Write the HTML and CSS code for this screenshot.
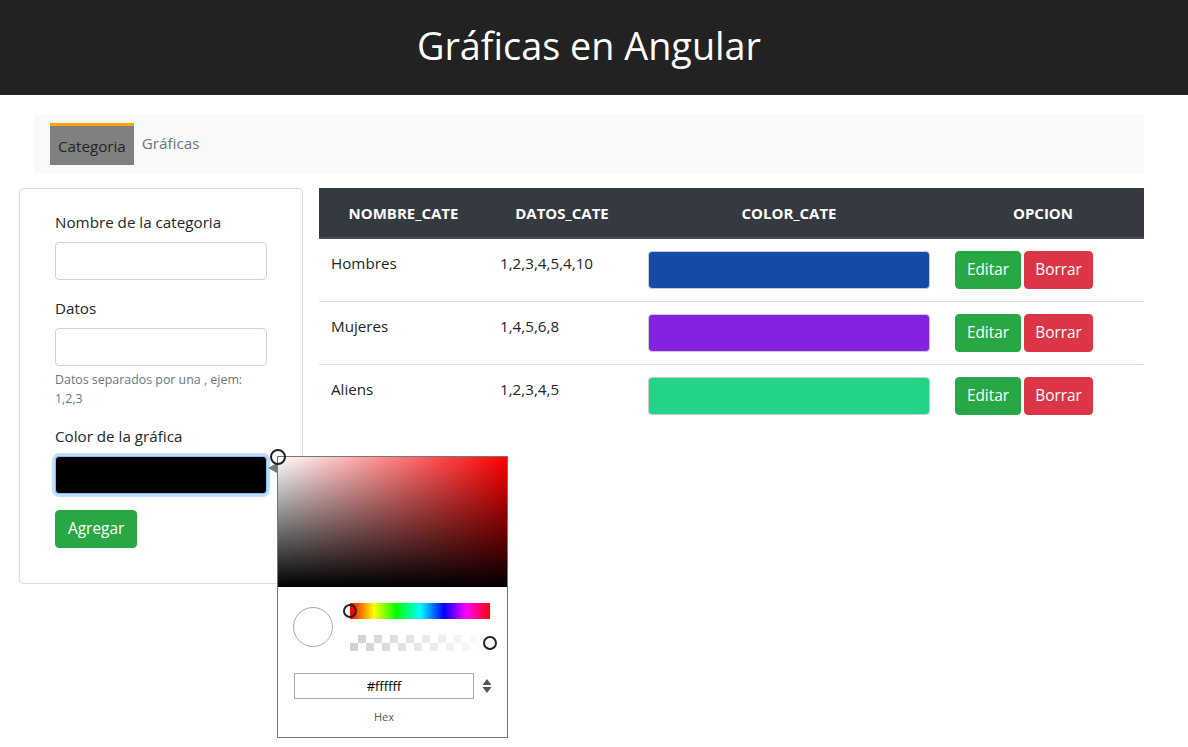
FILE: index.html
```html
<!DOCTYPE html>
<html lang="es">
<head>
<meta charset="utf-8">
<title>Gráficas en Angular</title>
<link rel="stylesheet" href="styles.css">
</head>
<body>
<header class="topbar">
  <h1 class="title">Gráficas en Angular</h1>
</header>

<nav class="tabs">
  <a class="tab tab-active">Categoria</a>
  <a class="tab">Gráficas</a>
</nav>

<section class="content">
  <div class="card">
    <div class="form-group">
      <label class="label">Nombre de la categoria</label>
      <div class="input"></div>
    </div>
    <div class="form-group">
      <label class="label">Datos</label>
      <div class="input"></div>
      <small class="help">Datos separados por una , ejem: 1,2,3</small>
    </div>
    <div class="form-group">
      <label class="label">Color de la gráfica</label>
      <div class="input input-color"></div>
    </div>
    <button class="btn btn-success">Agregar</button>
  </div>

  <table class="table">
    <colgroup>
      <col class="c1"><col class="c2"><col class="c3"><col class="c4">
    </colgroup>
    <thead>
      <tr><th>NOMBRE_CATE</th><th>DATOS_CATE</th><th>COLOR_CATE</th><th>OPCION</th></tr>
    </thead>
    <tbody>
      <tr>
        <td>Hombres</td><td>1,2,3,4,5,4,10</td>
        <td><div class="swatch sw-blue"></div></td>
        <td><div class="actions"><button class="btn btn-success">Editar</button><button class="btn btn-danger">Borrar</button></div></td>
      </tr>
      <tr>
        <td>Mujeres</td><td>1,4,5,6,8</td>
        <td><div class="swatch sw-purple"></div></td>
        <td><div class="actions"><button class="btn btn-success">Editar</button><button class="btn btn-danger">Borrar</button></div></td>
      </tr>
      <tr>
        <td>Aliens</td><td>1,2,3,4,5</td>
        <td><div class="swatch sw-green"></div></td>
        <td><div class="actions"><button class="btn btn-success">Editar</button><button class="btn btn-danger">Borrar</button></div></td>
      </tr>
    </tbody>
  </table>
</section>

<div class="picker">
  <span class="picker-arrow"></span>
  <div class="sat">
    <span class="sat-cursor"></span>
  </div>
  <div class="hue-alpha">
    <div class="selected"></div>
    <div class="sliders">
      <div class="hue"><span class="knob knob-hue"></span></div>
      <div class="alpha"><span class="knob knob-alpha"></span></div>
    </div>
  </div>
  <div class="hex-row">
    <div class="hex-input">#ffffff</div>
    <svg class="switch" width="10" height="16" viewBox="0 0 10 16"><path d="M5 1 L9.5 7 H0.5 Z M0.5 9 H9.5 L5 15 Z" fill="#555"/></svg>
  </div>
  <div class="hex-label">Hex</div>
</div>
</body>
</html>
```

FILE: styles.css
```css
* { box-sizing: border-box; }
body {
  margin: 0;
  font-family: "Open Sans", "Noto Sans", sans-serif;
  font-size: 15.2px;
  line-height: 24px;
  color: #212529;
  background: #fff;
}
.topbar {
  height: 95px;
  background: #222222;
  display: flex;
  align-items: center;
  justify-content: center;
}
.title {
  margin: 0;
  color: #fff;
  font-weight: 400;
  font-size: 37.8px;
  line-height: 1;
  padding: 0 10px 3px 0;
}
.tabs {
  margin: 20px 0 0 34px;
  width: 1110px;
  height: 58px;
  background: #f8f9fa;
  padding: 8px 16px;
  display: flex;
  align-items: flex-start;
}
.tab {
  padding: 8px 8px 7px;
  color: #6c757d;
  line-height: 24px;
}
.tab-active {
  background: #808080;
  border-top: 3px solid #ffa500;
  color: #212529;
  height: 42px;
}
.content {
  display: flex;
  align-items: flex-start;
  margin: 15px 0 0 19px;
  gap: 16px;
}
.card {
  width: 284px;
  border: 1px solid #dcdcdc;
  border-radius: 4px;
  padding: 21px 35px 35px 35px;
}
.form-group { margin-bottom: 16px; }
.label { display: block; margin-bottom: 8px; }
.input {
  height: 38px;
  border: 1px solid #ced4da;
  border-radius: 4px;
  background: #fff;
}
.input-color {
  background: #000;
  border-color: #80bdff;
  box-shadow: 0 0 0 3px rgba(0, 123, 255, 0.25);
  margin-top: 7px;
}
.help {
  display: block;
  margin-top: 4px;
  font-size: 12.4px;
  line-height: 19px;
  color: #6c757d;
}
.btn {
  font-family: inherit;
  font-size: 15.4px;
  line-height: 24px;
  padding: 6px 12px;
  border: 1px solid transparent;
  border-radius: 4px;
  color: #fff;
  cursor: pointer;
}
.btn-success { background: #28a745; border-color: #28a745; }
.btn-danger { background: #dc3545; border-color: #dc3545; }

.table {
  width: 825px;
  border-collapse: collapse;
  table-layout: fixed;
}
.c1 { width: 169px; }
.c2 { width: 148px; }
.c3 { width: 306px; }
.c4 { width: 202px; }
.table th {
  background: #343a40;
  color: #fff;
  font-weight: 700;
  font-size: 15px;
  line-height: 24px;
  padding: 13px 12px 12px;
  text-align: center;
  border-bottom: 2px solid #454d55;
}
.table td {
  padding: 12px;
  vertical-align: top;
  border-top: 1px solid #dee2e6;
}
.table tbody tr:first-child td { border-top: none; }
.swatch {
  height: 38px;
  border: 1px solid #c8cdd3;
  border-radius: 4px;
}
.sw-blue { background: #164aa6; }
.sw-purple { background: #8322e0; }
.sw-green { background: #23d486; }
.actions { display: flex; gap: 3px; padding-left: 1px; }
.actions .btn-success { width: 66px; padding: 6px 0; }
.actions .btn-danger { width: 69px; padding: 6px 0; }

/* color picker overlay */
.picker {
  position: absolute;
  left: 277px;
  top: 456px;
  width: 231px;
  height: 282px;
  border: 1px solid #777;
  background: #fff;
}
.picker-arrow {
  position: absolute;
  left: -10px;
  top: 6px;
  width: 0; height: 0;
  border-top: 5px solid transparent;
  border-bottom: 5px solid transparent;
  border-right: 9px solid #777;
}
.sat {
  position: relative;
  height: 130px;
  background:
    linear-gradient(to top, #000, rgba(0,0,0,0)),
    linear-gradient(to right, #fff, #f00);
}
.sat-cursor {
  position: absolute;
  left: -8px;
  top: -8px;
  width: 16px; height: 16px;
  border: 2px solid #222;
  border-radius: 50%;
}
.hue-alpha {
  display: flex;
  padding: 16px 16px 0 15px;
  gap: 17px;
}
.selected {
  width: 40px; height: 40px;
  margin-top: 4px;
  border: 1px solid #a9a9a9;
  border-radius: 50%;
  background: #fff;
}
.sliders {
  width: 140px;
  display: flex;
  flex-direction: column;
  gap: 16px;
}
.hue {
  position: relative;
  height: 16px;
  background: linear-gradient(to right, #f00 0%, #ff0 17%, #0f0 33%, #0ff 50%, #00f 67%, #f0f 83%, #f00 100%);
}
.alpha {
  position: relative;
  height: 16px;
  background:
    linear-gradient(to right, rgba(255,255,255,0), #fff),
    repeating-conic-gradient(#d0d0d0 0 25%, #fff 0 50%) 0 0 / 16px 16px;
}
.knob {
  position: absolute;
  top: 1px;
  width: 14px; height: 14px;
  border: 2px solid #222;
  border-radius: 50%;
}
.knob-hue { left: -7px; background: linear-gradient(to right, #fff 50%, #f00 50%); }
.knob-alpha { right: -7px; background: #fff; }
.hex-row {
  display: flex;
  align-items: center;
  padding: 22px 0 0 16px;
}
.hex-input {
  width: 180px;
  height: 26px;
  border: 1px solid #a9a9a9;
  font-size: 13px;
  line-height: 24px;
  text-align: center;
  color: #000;
}
.switch { margin-left: 8px; }
.hex-label {
  width: 180px;
  margin-left: 16px;
  margin-top: 6px;
  text-align: center;
  font-size: 11px;
  color: #555;
}
```
